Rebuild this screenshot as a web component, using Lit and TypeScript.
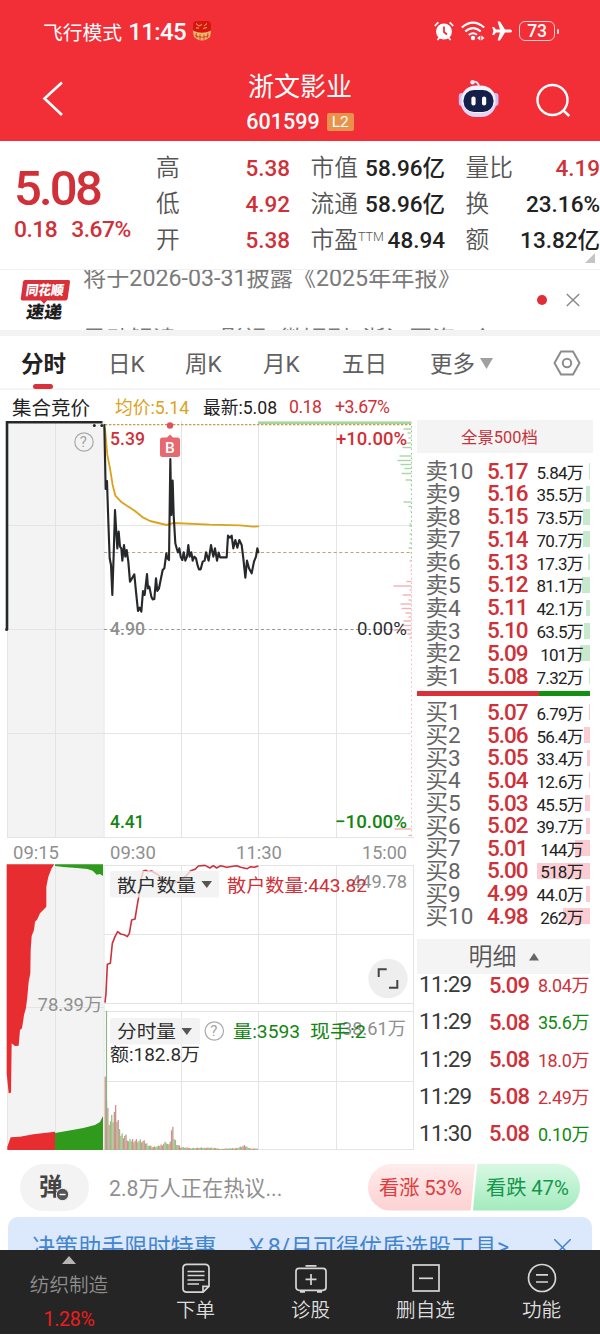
import { LitElement, html, svg, css } from "lit";
import { customElement, property } from "lit/decorators.js";

const FULL_VOLUME = 518;
const BAR_SPAN = 53;

type Level = [string, string, string, number];

const asks: Level[] = [
  ["卖10", "5.17", "5.84万", 5.84],
  ["卖9", "5.16", "35.5万", 35.5],
  ["卖8", "5.15", "73.5万", 73.5],
  ["卖7", "5.14", "70.7万", 70.7],
  ["卖6", "5.13", "17.3万", 17.3],
  ["卖5", "5.12", "81.1万", 81.1],
  ["卖4", "5.11", "42.1万", 42.1],
  ["卖3", "5.10", "63.5万", 63.5],
  ["卖2", "5.09", "101万", 101],
  ["卖1", "5.08", "7.32万", 7.32],
];

const bids: Level[] = [
  ["买1", "5.07", "6.79万", 6.79],
  ["买2", "5.06", "56.4万", 56.4],
  ["买3", "5.05", "33.4万", 33.4],
  ["买4", "5.04", "12.6万", 12.6],
  ["买5", "5.03", "45.5万", 45.5],
  ["买6", "5.02", "39.7万", 39.7],
  ["买7", "5.01", "144万", 144],
  ["买8", "5.00", "518万", 518],
  ["买9", "4.99", "44.0万", 44],
  ["买10", "4.98", "262万", 262],
];

const trades: [string, string, string, string][] = [
  ["11:29", "5.09", "8.04万", "up"],
  ["11:29", "5.08", "35.6万", "down"],
  ["11:29", "5.08", "18.0万", "up"],
  ["11:29", "5.08", "2.49万", "up"],
  ["11:30", "5.08", "0.10万", "down"],
];

/* Price and average lines, in thirds of a pixel from the chart's top left. */
const priceLine =
  "313,30 317,222 321,198 324,290 329,430 333,450 337,540 341,420 345,285 350,370 352,400 356,350 360,395 364,400 367,437 372,390 376,425 380,405 385,440 390,500 396,490 403,478 408,530 414,588 419,578 424,590 429,528 434,540 441,477 444,520 448,515 454,545 458,553 463,552 468,490 472,528 477,520 483,490 488,465 493,460 499,415 502,430 507,435 511,132 514,300 518,197 521,300 526,385 530,400 534,412 538,400 542,425 547,435 551,412 556,437 561,425 565,390 569,425 574,412 578,437 583,425 588,430 593,452 597,463 602,463 608,440 614,437 618,412 626,437 633,390 640,425 645,400 651,437 656,413 660,427 680,427 684,362 690,368 695,362 700,400 706,375 712,398 718,375 725,390 730,430 736,488 741,437 747,460 755,475 762,440 768,425 772,400 775,412";
const averageLine =
  "315,40 322,120 330,160 338,210 346,242 365,262 405,288 430,308 450,318 500,330 520,324 630,329 720,331 760,335 775,334";
const retailLine =
  "315,608 318,580 322,493 331,490 337,430 345,410 353,395 362,402 372,404 382,410 388,400 395,360 405,357 411,320 418,280 424,235 430,213 438,211 444,215 455,213 470,222 490,238 515,250 540,243 560,226 572,212 585,208 595,198 615,196 630,204 640,197 650,204 662,197 680,202 710,197 722,202 742,206 752,200 763,202 775,198";

const depth: [number, number][] = [
  [429, 8], [433, 4], [438, 3], [443, 5], [447.5, 9], [456, 12], [460.5, 14], [464.5, 11], [468.5, 7],
  [473.5, 10], [480, 6], [484, 1], [489, 1], [502, 8], [506.5, 3], [511, 1], [524, 2], [526, 2], [534, 2],
  [539, 1], [543, 2], [548, 3],
];
const depthLow: [number, number][] = [
  [553, 1], [561, 2], [567, 1], [571, 1], [581.5, 5], [586, 18], [590, 2], [595, 9], [600, 3], [604, 11],
  [608.5, 10], [613, 6], [617, 3], [621, 8], [625.5, 9], [630, 18], [634, 4], [638, 2], [829, 17], [835.5, 3],
];

const volumeProfile: [number, number][] = [
  [105, 68], [107, 41], [109, 30], [112, 33], [114.5, 42], [117, 30], [119, 29], [120, 16], [125, 15], [128, 9],
  [132, 11], [138, 10], [143, 9], [147, 6], [152, 3], [158, 4], [163, 7], [166, 9], [168, 4], [170, 12],
  [171.5, 26], [173, 14], [176, 7], [180, 3], [190, 2], [209, 2.5], [220, 1.2], [236, 2], [244, 4.5], [250, 1.5], [259, 1.5],
];

function volumeAt(x: number): number {
  for (let i = 1; i < volumeProfile.length; i++) {
    const [x1, h1] = volumeProfile[i];
    if (x <= x1) {
      const [x0, h0] = volumeProfile[i - 1];
      return h0 + ((h1 - h0) * (x - x0)) / (x1 - x0);
    }
  }
  return 1;
}

const volumeBars = Array.from({ length: 118 }, (_, i) => {
  const x = 104.6 + i * 1.3;
  const wobble = 0.72 + ((i * 37) % 11) / 24;
  return { x, h: volumeAt(x) * (i < 1 ? 1 : wobble), up: (i * 29) % 7 < 4 };
});

@customElement("stock-chart")
export class StockChart extends LitElement {
  static styles = css`
    :host { display: block; width: 414px; height: 730px; }
    svg { display: block; font-family: Roboto, "Noto Sans CJK SC", sans-serif; }
    .grid { stroke: #e4e4e4; stroke-width: 1; fill: none; }
    .grey { fill: #8f8f8f; }
    .dark { fill: #2e2e2e; }
    .up { fill: #d03038; }
    .down { fill: #128512; }
    .t { font-size: 18.5px; }
    .m { font-weight: 500; }
  `;

  render() {
    const label = (x: number, y: number, w: number, cls: string, text: string) =>
      svg`<text x=${x} y=${y} textLength=${w} lengthAdjust="spacingAndGlyphs" class=${"t " + cls}>${text}</text>`;
    return html`<svg width="414" height="730" viewBox="0 420 414 730">
      <rect x="7" y="421" width="96.5" height="416" fill="#f3f3f3" />
      <rect x="7" y="865" width="96.5" height="285" fill="#f3f3f3" />
      <path class="grid" d="M7 525.5H411M7 733.5H411M7 837.5H414M104 865.5H414M104 934.5H414M104 1003.5H414M104 1011.5H414M104 1081.5H414M7 1149.5H414M7 629.5H104M7 1007.5H104
        M7.5 421V837M7.5 865V1150M55.5 421V837M55.5 865V1150M104 421V837M104 865V1150M181.5 421V837M181.5 865V1003M181.5 1011V1150M258.5 421V837M258.5 865V1003M258.5 1011V1150M336.5 421V837M336.5 865V1003M336.5 1011V1150M413.5 865V1150" />
      <path d="M411.5 426V560" stroke="#8fc58f" stroke-dasharray="1.5 3" />
      <path d="M411.5 560V837" stroke="#f2b6bc" stroke-dasharray="1.5 3" />
      <rect x="258" y="421.4" width="153.5" height="2.6" fill="#a6d6a0" />
      <path d="M105 424.7H411" stroke="#c99a45" stroke-width="1.2" stroke-dasharray="2.4 1.6" />
      <path d="M104 552.5H411" stroke="#c3a186" stroke-width="1.2" stroke-dasharray="3.2 2.4" />
      <path d="M104 629.5H411" stroke="#999" stroke-width="1.2" stroke-dasharray="3.2 2.4" />
      ${depth.map(([y, w]) => svg`<rect x=${411.5 - w} y=${y - 0.7} width=${w} height="1.4" fill="#a9d6a6" />`)}
      ${depthLow.map(([y, w]) => svg`<rect x=${411.5 - w} y=${y - 0.7} width=${w} height="1.4" fill="#f0b3ba" />`)}

      <path d="M7 629.5V422.3H102.5" fill="none" stroke="#26282a" stroke-width="2.6" />
      <circle cx="94.3" cy="425.6" r="1.5" fill="#26282a" /><circle cx="101.8" cy="425.6" r="1.5" fill="#26282a" />
      <circle cx="6.6" cy="629.5" r="1.5" fill="#26282a" />
      <g transform="translate(0 415) scale(.33333)" fill="none" stroke-linejoin="round" stroke-linecap="round">
        <polyline points=${averageLine} stroke="#dba31d" stroke-width="5.5" />
        <polyline points=${priceLine} stroke="#26282a" stroke-width="6.4" />
      </g>
      <circle cx="170" cy="425.5" r="3.2" fill="#e0525c" />
      <path d="M162.5 437.5H167L170 434.5L173 437.5H177.5Q180 437.5 180 440V454.5Q180 457 177.5 457H162.5Q160 457 160 454.5V440Q160 437.5 162.5 437.5Z" fill="#e8686f" />
      <text x="165" y="452.8" font-size="15.5" font-weight="500" fill="#fff">B</text>

      <circle cx="84" cy="442" r="9.2" fill="none" stroke="#aaa" stroke-width="1.2" />
      <text x="79.8" y="447.2" font-size="15" fill="#a4a4a4">?</text>
      ${label(110, 445, 35, "up m", "5.39")}
      ${label(110, 634.5, 35, "grey m", "4.90")}
      ${label(110, 828, 34.5, "down m", "4.41")}
      ${label(336, 445, 71, "up m", "+10.00%")}
      ${label(357, 634.5, 50, "dark", "0.00%")}
      ${label(335, 828, 72, "down m", "−10.00%")}
      ${label(13, 859, 46, "grey", "09:15")}
      ${label(110, 859, 46, "grey", "09:30")}
      ${label(236, 859, 46, "grey", "11:30")}
      ${label(362, 859, 45, "grey", "15:00")}

      <g transform="translate(0 800) scale(.33333)">
        <path fill="#e72d2f" d="M20 193H163L155 205L145 230L139 260V320L120 340L112 358L105 365L102 390L95 408L92 450L91 520L86 545L82 590L78 624L72 645L70 660L66 685L60 690L56 737L45 738L35 730L33 878L26 880L20 820Z" />
        <path fill="#2f9a1c" d="M165 193H309V228L300 222L290 224L278 212L262 207L230 204L190 201L165 198Z" />
        <path fill="#e72d2f" d="M22 1050V1040L32 1012L60 1010L100 1003L165 995V1050Z" />
        <path fill="#2f9a1c" d="M165 1050V999L200 993L250 984L285 975L300 966L309 948V1050Z" />
        <polyline points=${retailLine} fill="none" stroke="#c9333b" stroke-width="4.8" stroke-linejoin="round" />
      </g>
      ${label(37.5, 1011, 65, "grey", "78.39万")}

      ${volumeBars.map((b) => svg`<rect x=${b.x} y=${1150 - b.h} width="1.3" height=${b.h} fill=${b.up ? "#c9958a" : "#93c07f"} />`)}
      <rect x="105.9" y="1011" width="1.2" height="139" fill="#8cb582" />

      <rect x="110" y="871" width="109" height="26.5" rx="2" fill="#f0f0f0" fill-opacity=".78" />
      ${label(117, 891.5, 79, "dark", "散户数量")}
      <path d="M201.5 881H212L206.8 888Z" fill="#555" />
      ${label(351, 888, 56, "grey", "449.78")}
      ${label(227, 891.5, 140, "up", "散户数量:443.82")}

      <circle cx="388" cy="978.5" r="19.7" fill="#eeeeee" />
      <path d="M378.7 977V969.3H386.7M397.3 980V987.8H389" fill="none" stroke="#444" stroke-width="2" />

      <rect x="110" y="1018" width="90" height="26.5" rx="2" fill="#f0f0f0" fill-opacity=".78" />
      ${label(117, 1038, 59, "dark", "分时量")}
      <path d="M181.5 1028H192L186.8 1035Z" fill="#555" />
      <circle cx="214.3" cy="1031" r="9.2" fill="none" stroke="#aaa" stroke-width="1.2" />
      <text x="210.2" y="1036.3" font-size="15" fill="#a4a4a4">?</text>
      ${label(342, 1034.5, 64, "grey", "38.61万")}
      ${label(233, 1038, 67, "down", "量:3593")}
      ${label(310, 1038, 56, "down", "现手:2")}
      ${label(110, 1060.5, 90, "dark", "额:182.8万")}
    </svg>`;
  }
}

@customElement("order-book")
export class OrderBook extends LitElement {
  static styles = css`
    :host { display: flex; flex-direction: column; width: 176px; height: 730px; font-family: Roboto, "Noto Sans CJK SC", sans-serif; }
    :host > * { flex: none; }
    .head { height: 33.5px; line-height: 35px; background: #f4f4f4; text-align: center; color: #c8323a; font-size: 16.4px; padding-right: 11px; }
    .levels { display: flex; flex-direction: column; }
    .asks { padding-top: 6px; }
    .row { display: grid; grid-template-columns: 70px 49.5px 53.5px; height: 22.8px; line-height: 22.8px; white-space: nowrap; }
    .bids .row { height: 22.65px; line-height: 22.65px; }
    .name { padding: 1px 0 0 8.5px; font-size: 22.5px; color: #666; font-weight: 400; }
    .price { padding-top: .5px; font-size: 22.5px; font-weight: 500; letter-spacing: -1px; color: #d03038; }
    .vol { position: relative; font-size: 17px; letter-spacing: -.7px; color: #222; padding-top: 2.5px; }
    .vol span { position: relative; display: block; text-align: right; padding-right: 7px; }
    .bar { position: absolute; right: 0; top: 4px; height: 16px; background: #c9e9cc; }
    .bids .bar { background: #fbcdd2; }
    .ratio { display: flex; height: 5.5px; width: 173px; margin: 4px 0; }
    .sell { width: 122px; background: #d9303a; }
    .buy { flex: 1; background: #119012; }
    .detail { margin: 12px 0 0; width: 173px; height: 35.5px; background: #f4f4f4; color: #555; font-size: 24px; line-height: 38px; font-weight: 350; display: flex; justify-content: center; align-items: center; gap: 12px; }
    .trade { display: grid; grid-template-columns: 72px 45px 56px; height: 37.1px; line-height: 21px; white-space: nowrap; }
    .time { padding-left: 2px; font-size: 22.5px; letter-spacing: -.7px; color: #3a3a3a; }
    .trade .price { padding-top: .5px; font-weight: 500; font-size: 22px; letter-spacing: -.9px; }
    .qty { font-size: 18px; letter-spacing: -.4px; text-align: right; padding-top: 1px; padding-right: 1px; }
    .up { color: #d03038; }
    .down { color: #118a12; }
  `;

  private levels(rows: Level[], kind: string) {
    return html`<div class="levels ${kind}">
      ${rows.map(
        ([name, price, vol, n]) => html`<div class="row">
          <div class="name">${name}</div>
          <div class="price">${price}</div>
          <div class="vol"><div class="bar" style="width:${((n / FULL_VOLUME) * BAR_SPAN).toFixed(1)}px"></div><span>${vol}</span></div>
        </div>`
      )}
    </div>`;
  }

  render() {
    return html`
      <div class="head">全景500档</div>
      ${this.levels(asks, "asks")}
      <div class="ratio"><div class="sell"></div><div class="buy"></div></div>
      ${this.levels(bids, "bids")}
      <div class="detail">明细<svg width="10" height="8"><path d="M5 0L10 7.5H0Z" fill="#666" /></svg></div>
      ${trades.map(
        ([t, p, q, c]) => html`<div class="trade"><div class="time">${t}</div><div class="price">${p}</div><div class="qty ${c}">${q}</div></div>`
      )}
    `;
  }
}

@customElement("nav-icon")
export class NavIcon extends LitElement {
  @property() name = "";
  static styles = css`
    :host { display: block; height: 30px; }
    svg { display: block; fill: none; stroke: #d6d6d6; stroke-width: 1.7; }
  `;
  render() {
    const shapes: Record<string, unknown> = {
      order: svg`<path d="M7 1.3H25Q29 1.3 29 5.3V23.3L23 29.2H7Q3 29.2 3 25.3V5.3Q3 1.3 7 1.3ZM23 29.2V23.3H29"/><path d="M7.5 8.5H24.5M7.5 12.5H24.5M7.5 17H24.5M7.5 21H19"/>`,
      doctor: svg`<rect x="1" y="5.3" width="30" height="22" rx="3"/><path d="M10.5 2.8H21.5M16 11V22M10.5 16.3H21.5M5 28.8H10M22 28.8H27"/>`,
      remove: svg`<rect x="3" y="2" width="26" height="26"/><path d="M9 15.3H23"/>`,
      menu: svg`<circle cx="16" cy="15" r="13.5"/><path d="M10 11.8H22M10 19H22"/>`,
    };
    return html`<svg width="32" height="30" viewBox="0 0 32 30">${shapes[this.name]}</svg>`;
  }
}

@customElement("app-root")
export class AppRoot extends LitElement {
  static styles = css`
    :host { display: flex; flex-direction: column; width: 600px; height: 1335px; overflow: hidden; background: #fff; color: #222; font-family: Roboto, "Noto Sans CJK SC", sans-serif; white-space: nowrap; }
    :host > * { flex: none; }
    * { box-sizing: border-box; }
    svg { display: block; flex: none; }
    .header { height: 140.5px; background: #f22f37; color: #fff; }
    .status { height: 62px; padding: 0 41px 0 43px; display: flex; align-items: center; }
    .mode { font-size: 19.8px; margin-right: 6px; }
    .clock { font-size: 24px; letter-spacing: -.6px; font-weight: 500; margin-right: 6px; padding-top: 2px; }
    .sys { margin-left: auto; display: flex; align-items: center; gap: 7px; }
    .battery { width: 36px; height: 20px; border: 1.6px solid #fbd0d2; border-radius: 6px; font-size: 17.5px; line-height: 18px; text-align: center; font-weight: 500; letter-spacing: -.3px; }
    .cap { width: 2px; height: 5px; border-radius: 1px; background: #fbd0d2; margin-left: -5px; }
    .bar { display: grid; grid-template-columns: 199px 200px 201px; height: 78px; }
    .back { padding: 19px 0 0 42px; }
    .title { display: flex; flex-direction: column; align-items: center; padding: 8px 0 0 2px; }
    .title b { font-weight: 400; font-size: 26px; line-height: 34px; }
    .code { display: flex; align-items: center; gap: 7px; font-size: 21.5px; line-height: 35px; font-weight: 500; }
    .l2 { width: 27px; height: 18px; border-radius: 2px; background: #e9924b; font-size: 15.5px; line-height: 18.5px; text-align: center; font-weight: 400; }
    .tools { display: flex; padding: 17px 0 0 59px; gap: 37px; }

    .quote { display: flex; height: 129px; padding-left: 14px; border-bottom: 1px solid #f1f1f1; }
    .last { width: 142px; color: #d03038; padding-top: 20px; }
    .big { font-size: 49px; line-height: 56px; font-weight: 500; letter-spacing: -2.8px; }
    .chg { display: flex; gap: 14px; font-size: 22.8px; line-height: 26px; letter-spacing: -.5px; font-weight: 500; }
    .stats { display: grid; grid-template-columns: 134px 134.5px 134.5px; column-gap: 20.5px; grid-auto-rows: 36.3px; padding-top: 9.5px; }
    .stat { display: flex; justify-content: space-between; align-items: center; color: #555; font-size: 23.7px; font-weight: 350; line-height: 37px; }
    .stat sup { font-size: 12.5px; line-height: 1; vertical-align: 7px; }
    .stat b { font-size: 22.5px; font-weight: 500; color: #222; }
    .stat b.up { color: #d03038; }
    .fold { align-self: flex-end; margin: 0 0 6px -15px; }

    .news { height: 60px; display: flex; padding-left: 20px; overflow: hidden; }
    .logo { margin-top: 9px; }
    .lines { width: 455px; margin-left: 12px; margin-top: -19.5px; font-size: 23.2px; font-weight: 400; line-height: 57px; color: #7a7a7a; overflow: hidden; height: 84px; }
    .lines div { height: 60.5px; }
    .dot { width: 10px; height: 10px; border-radius: 5px; background: #e12d37; margin: 25px 19px 0 -1px; }
    .band { height: 6px; background: #f3f3f3; }

    .tabs { height: 54px; border-bottom: 2px solid #f4f4f4; display: flex; padding-left: 21px; font-size: 22.5px; line-height: 56px; color: #606060; }
    .tab { font-weight: 400; height: 56px; }
    .tab.on { color: #222; font-weight: 700; width: 87px; display: flex; flex-direction: column; }
    .tab.on::after { content: ""; width: 20px; height: 5px; border-radius: 3px; background: #d9303a; margin: -8px 0 0 12px; }
    .d { width: 77px; } .w { width: 78px; } .mo { width: 79px; } .fd { width: 88px; }
    .more { display: flex; align-items: center; gap: 5px; width: 123px; }
    .info { height: 30px; padding: 3px 12px 0; display: flex; align-items: center; font-size: 17.7px; color: #222; }
    .i1 { font-size: 19.5px; width: 103px; } .i2 { color: #dba31d; width: 88px; } .i3 { width: 86px; } .i4 { width: 46px; padding-top: 1px; letter-spacing: -.5px; }
    .i5 { letter-spacing: -.5px; padding-top: 1px; }
    .up { color: #d03038; }
    .main { display: flex; gap: 3px; height: 730px; }

    .talk { height: 67.5px; padding: 14.5px 20px 0; display: flex; }
    .pill { width: 69px; height: 46.5px; border-radius: 24px; background: #f3f3f3; color: #444; font-size: 23.5px; line-height: 46px; font-weight: 700; display: flex; padding-left: 19px; }
    .pill svg { margin: 23.5px 0 0 -7px; }
    .hot { margin-left: 20px; width: 259px; font-size: 21.2px; line-height: 49px; color: #909090; font-weight: 400; }
    .vote { width: 212px; height: 46.5px; border-radius: 24px; overflow: hidden; display: flex; font-size: 20.3px; line-height: 48px; letter-spacing: -.1px; }
    .rise { width: 107px; margin-right: -2px; padding-left: 11px; color: #e03c40; background: linear-gradient(#feecec, #fdd1d1); clip-path: polygon(0 0, 100% 0, 96% 100%, 0 100%); }
    .fall { flex: 1; padding-left: 13px; color: #14974c; background: linear-gradient(#d8f8e4, #a2ebbd); clip-path: polygon(4% 0, 100% 0, 100% 100%, 0 100%); }
    .banner { margin: 0 8px; height: 32.5px; border-radius: 10px 10px 0 0; background: #dce8fb; color: #4385cf; font-size: 23.1px; line-height: 62px; font-weight: 400; padding: 0 20px 0 24px; display: flex; overflow: hidden; }
    .offer { margin-left: 28px; width: 309px; letter-spacing: -.1px; }
    .banner svg { margin-top: 22px; }

    .nav { height: 84.5px; background: #252525; color: #dedede; display: grid; grid-template-columns: 138px 115px 115px 115px 117px; font-size: 19.6px; line-height: 28px; }
    .item { display: flex; flex-direction: column; align-items: center; padding-top: 13px; gap: 4px; font-weight: 350; }
    .sector { display: flex; flex-direction: column; align-items: center; padding-top: 6px; color: #8e8e8e; font-weight: 350; }
    .sector .name { line-height: 44px; height: 41px; }
    .sector .pct { line-height: 30px; color: #ee1c1c; letter-spacing: -.3px; font-weight: 400; }
  `;

  private stat(name: unknown, value: string, up = false) {
    return html`<div class="stat"><span>${name}</span><b class=${up ? "up" : ""}>${value}</b></div>`;
  }

  render() {
    return html`
      <div class="header">
        <div class="status">
          <span class="mode">飞行模式</span><span class="clock">11:45</span>
          <svg width="20" height="20" viewBox="0 0 20 20"><rect x="1" y="0" width="18" height="13" rx="4" fill="#d8150f"/><path d="M.8 9.5Q10 14 19.2 9.5L18 16Q10 23 2 16Z" fill="#f0b76a"/><path d="M4 2.5L7 5L10 3.5M12 5L15 2.5M4 7H7M11 7.5L15 6.5" stroke="#f5b765" stroke-width="1" fill="none"/><path d="M4 12L5 17M8 13.5V19M12 13.5V19M16 12L15 17M3 14.5Q10 18 17 14.5" stroke="#c8321d" stroke-width=".8" fill="none"/></svg>
          <div class="sys">
            <svg width="20" height="20" viewBox="0 0 20 20"><circle cx="10" cy="10.5" r="8" fill="#fff"/><path d="M10 5.5V11L13 13.5" stroke="#f22f37" stroke-width="1.8" fill="none"/><path d="M.8 4.8L4.3 1.3M19.2 4.8L15.7 1.3M3.5 19L5.5 16.5M16.5 19L14.5 16.5" stroke="#fff" stroke-width="1.8"/></svg>
            <svg width="24" height="20" viewBox="0 0 24 20" fill="none" stroke="#fff" stroke-width="2.1"><path d="M.8 6.5Q12-3.4 23.2 6.5M4.3 10.5Q12 3.6 19.7 10.5M7.8 14Q12 10.6 16 13.8"/><circle cx="12" cy="17" r="2.2" fill="#fff" stroke="none"/><path d="M19.3 14.5V19.5L16 17ZM20.3 14.5V19.5L23.6 17Z" fill="#fff" stroke="none"/></svg>
            <svg width="20" height="20" viewBox="0 0 20 20" fill="#fff"><path d="M20 10Q20 8.4 18 8.4H13L8 .5H5.6L8 8.4H4L2 6H.2L1.4 10L.2 14H2L4 11.6H8L5.6 19.5H8L13 11.6H18Q20 11.6 20 10Z"/></svg>
            <div class="battery">73</div><div class="cap"></div>
          </div>
        </div>
        <div class="bar">
          <div class="back"><svg width="22" height="36" viewBox="0 0 22 36"><path d="M20 1.5L2.5 17.5L20 34" fill="none" stroke="#fff" stroke-width="2.6"/></svg></div>
          <div class="title"><b>浙文影业</b><div class="code">601599<span class="l2">L2</span></div></div>
          <div class="tools">
            <svg width="41" height="40" viewBox="0 0 41 40"><path d="M14 3Q20 1 21 8" stroke="#f3e6fb" stroke-width="1.8" fill="none"/><circle cx="14.5" cy="3.2" r="2.2" fill="#f3e6fb"/><rect x=".8" y="14" width="6" height="13" rx="3" fill="#c9baf2"/><rect x="34.5" y="14" width="6" height="13" rx="3" fill="#c9baf2"/><rect x="2.5" y="6.5" width="36" height="31.5" rx="15.5" fill="#e0d4fa"/><rect x="4" y="7" width="33" height="27" rx="13" fill="#f4f2fd"/><rect x="5.5" y="11" width="30" height="22" rx="10.5" fill="#15204a"/><rect x="13.4" y="17.5" width="4.2" height="9" rx="2.1" fill="#fff"/><rect x="24" y="17.5" width="4.2" height="9" rx="2.1" fill="#fff"/></svg>
            <svg width="36" height="40" viewBox="0 0 36 40" fill="none" stroke="#fff" stroke-width="2.4"><circle cx="16.5" cy="21" r="15"/><path d="M26.8 31L33.3 37"/></svg>
          </div>
        </div>
      </div>

      <div class="quote">
        <div class="last"><div class="big">5.08</div><div class="chg"><span>0.18</span><span>3.67%</span></div></div>
        <div class="stats">
          ${this.stat("高", "5.38", true)} ${this.stat("市值", "58.96亿")} ${this.stat("量比", "4.19", true)}
          ${this.stat("低", "4.92", true)} ${this.stat("流通", "58.96亿")} ${this.stat("换", "23.16%")}
          ${this.stat("开", "5.38", true)} ${this.stat(html`市盈<sup>TTM</sup>`, "48.94")} ${this.stat("额", "13.82亿")}
        </div>
        <svg class="fold" width="10" height="10"><path d="M10 0V10H0Z" fill="#c4c4c4" /></svg>
      </div>

      <div class="news">
        <svg class="logo" width="51" height="52" viewBox="0 0 51 52" font-family="Noto Sans CJK SC, sans-serif" font-weight="900">
          <path d="M5 1H48.5Q50.3 1 50 3L47.7 19.5Q47.4 21.5 45.4 21.5H27L24 25L21 21.5H2.5Q.5 21.5 .8 19.5L3 3Q3.3 1 5 1Z" fill="#d9303a" />
          <text x="7.5" y="16.3" font-size="13.5" textLength="38" lengthAdjust="spacingAndGlyphs" fill="#fff" transform="skewX(-8)">同花顺</text>
          <text x="11" y="39.5" font-size="17" textLength="36" lengthAdjust="spacingAndGlyphs" fill="#1e1e1e" transform="skewX(-8)">速递</text>
        </svg>
        <div class="lines"><div>将于2026-03-31披露《2025年年报》</div><div>异动解读：AI影视+微短剧+浙江国资…↑</div></div>
        <div class="dot"></div>
        <svg width="14" height="44" viewBox="0 0 14 44"><path d="M.8 24L13.2 36M13.2 24L.8 36" stroke="#8a8a8a" stroke-width="1.5" /></svg>
      </div>
      <div class="band"></div>

      <div class="tabs">
        <div class="tab on">分时</div><div class="tab d">日K</div><div class="tab w">周K</div><div class="tab mo">月K</div><div class="tab fd">五日</div>
        <div class="tab more">更多<svg width="13" height="11"><path d="M0 0H13L6.5 11Z" fill="#a0a0a0" /></svg></div>
        <svg width="28" height="54" viewBox="0 0 28 54" fill="none" stroke="#8c8c8c" stroke-width="2"><path d="M8 15.5H20L26.5 27L20 38.5H8L1.5 27Z" stroke-linejoin="round"/><circle cx="14" cy="27" r="4.2"/></svg>
      </div>

      <div class="info"><span class="i1">集合竞价</span><span class="i2">均价:5.14</span><span class="i3">最新:5.08</span><span class="i4 up">0.18</span><span class="i5 up">+3.67%</span></div>

      <div class="main"><stock-chart></stock-chart><order-book></order-book></div>

      <div class="talk">
        <div class="pill">弹<svg width="13" height="13"><circle cx="6.5" cy="6.5" r="6.2" fill="#555" stroke="#f3f3f3" stroke-width="1"/><path d="M3.5 6.5H9.5" stroke="#fff" stroke-width="1.4"/></svg></div>
        <div class="hot">2.8万人正在热议...</div>
        <div class="vote"><div class="rise">看涨 53%</div><div class="fall">看跌 47%</div></div>
      </div>
      <div class="banner"><span>决策助手限时特惠</span><span class="offer">￥8/月可得优质选股工具&gt;</span><svg width="17" height="17"><path d="M0 0L17 17M17 0L0 17" stroke="#4385cf" stroke-width="1.5" /></svg></div>

      <div class="nav">
        <div class="sector"><svg width="14" height="8"><path d="M7 0L14 8H0Z" fill="#b5b5b5" /></svg><span class="name">纺织制造</span><span class="pct">1.28%</span></div>
        <div class="item"><nav-icon name="order"></nav-icon>下单</div>
        <div class="item"><nav-icon name="doctor"></nav-icon>诊股</div>
        <div class="item"><nav-icon name="remove"></nav-icon>删自选</div>
        <div class="item"><nav-icon name="menu"></nav-icon>功能</div>
      </div>
    `;
  }
}
